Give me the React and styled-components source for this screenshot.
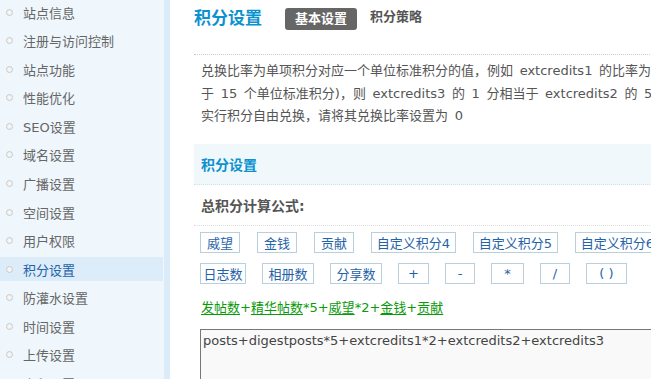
import React from "react";
import styled, { createGlobalStyle } from "styled-components";

const Global = createGlobalStyle`
  html, body {
    margin: 0;
    padding: 0;
    overflow: hidden;
    background: #fff;
  }
  body {
    font-family: "DejaVu Sans", "Noto Sans CJK SC", sans-serif;
    font-size: 13px;
    color: #555;
  }
`;

const Page = styled.div`
  display: flex;
  width: 100vw;
  height: 100vh;
  overflow: hidden;
`;

const Sidebar = styled.div`
  flex: 0 0 164px;
  background: #eff7fc;
  border-right: 6px solid #dcebf8;
  overflow: hidden;
`;

const NavList = styled.ul`
  list-style: none;
  margin: 0;
  padding: 0 1px 0 0;
  display: flex;
  flex-direction: column;
  gap: 4.58px;
`;

const NavItem = styled.li`
  display: flex;
  align-items: center;
  height: 24px;
  padding-left: 6px;
  gap: 10px;
  flex-shrink: 0;
  color: ${(p) => (p.$active ? "#1f63a8" : "#666")};
  background: ${(p) => (p.$active ? "#dcecf9" : "transparent")};
  white-space: nowrap;
`;

const Bullet = styled.span`
  width: 5px;
  height: 5px;
  border-radius: 50%;
  border: 1px solid #c9c9c9;
  background: #f6f6f6;
  box-shadow: inset 0 0 1px #ddd;
`;

const Main = styled.div`
  flex: 1;
  min-width: 0;
  overflow: hidden;
  padding-left: 24px;
`;

const Inner = styled.div`
  width: 900px;
`;

const Header = styled.div`
  display: flex;
  align-items: flex-start;
  height: 55px;
  box-sizing: border-box;
  padding-top: 8px;
  border-bottom: 1px dotted #ccc;
`;

const Title = styled.h2`
  margin: 0 23px 0 0;
  font-size: 17px;
  line-height: 18px;
  font-weight: bold;
  color: #0b92cf;
  font-family: "Noto Sans CJK SC", sans-serif;
`;

const Tab = styled.span`
  display: flex;
  align-items: center;
  height: 22px;
  padding: 0 10px;
  margin-right: 13px;
  border-radius: 3px;
  font-weight: bold;
  line-height: 22px;
  color: ${(p) => (p.$active ? "#fff" : "#555")};
  background: ${(p) => (p.$active ? "#666" : "transparent")};
  ${(p) => !p.$active && "padding: 0; height: 18px; line-height: 18px;"}
`;

const Note = styled.div`
  padding: 5px 0 0 7px;
  line-height: 22.5px;
  word-spacing: 2.5px;
  white-space: nowrap;
  color: #555;
`;

const SectionHead = styled.div`
  margin-top: 16px;
  height: 40px;
  display: flex;
  align-items: center;
  padding-left: 7px;
  background: #f1f8fc;
  border-bottom: 1px dotted #cfe2ee;
  font-size: 14px;
  font-weight: bold;
  color: #0b92cf;
`;

const Label = styled.div`
  height: 40px;
  display: flex;
  align-items: center;
  padding-left: 7px;
  border-bottom: 1px dotted #ddd;
  font-size: 14px;
  font-weight: bold;
  color: #555;
`;

const Buttons = styled.div`
  display: flex;
  flex-direction: column;
  gap: 10px;
  padding: 6px 0 0 6px;
`;

const BtnRow = styled.div`
  display: flex;
  gap: ${(p) => p.$gap}px;
`;

const Btn = styled.span`
  display: flex;
  align-items: center;
  justify-content: center;
  box-sizing: border-box;
  width: ${(p) => p.$w}px;
  height: 21px;
  border: 1px solid #b7d0dc;
  background: #fff;
  color: #1f63a8;
  white-space: nowrap;
  flex-shrink: 0;
`;

const Formula = styled.div`
  margin: 14px 0 0 7px;
  line-height: 20px;
  color: #0a9a0a;
  white-space: nowrap;
`;

const Term = styled.u`
  text-decoration: underline;
  text-underline-offset: 2px;
`;

const Area = styled.textarea`
  display: block;
  margin: 11px 0 0 6px;
  width: 620px;
  height: 90px;
  padding: 3px 2px;
  box-sizing: border-box;
  border: 1px solid #aaa;
  border-top-color: #777;
  border-left-color: #777;
  background: #f9f9f9;
  color: #444;
  font-family: "DejaVu Sans", sans-serif;
  font-size: 13px;
  line-height: 16px;
  resize: none;
  outline: none;
`;

const nav = [
  "站点信息",
  "注册与访问控制",
  "站点功能",
  "性能优化",
  "SEO设置",
  "域名设置",
  "广播设置",
  "空间设置",
  "用户权限",
  "积分设置",
  "防灌水设置",
  "时间设置",
  "上传设置",
  "水印设置",
];

const row1 = [
  ["威望", 40],
  ["金钱", 40],
  ["贡献", 40],
  ["自定义积分4", 85],
  ["自定义积分5", 85],
  ["自定义积分6", 85],
];

const row2 = [
  ["日志数", 46],
  ["相册数", 52],
  ["分享数", 52],
  ["+", 31],
  ["-", 30],
  ["*", 33],
  ["/", 30],
  ["( )", 41],
];

export default function App() {
  return (
    <Page>
      <Global />
      <Sidebar>
        <NavList>
          {nav.map((n) => (
            <NavItem key={n} $active={n === "积分设置"}>
              <Bullet />
              {n}
            </NavItem>
          ))}
        </NavList>
      </Sidebar>
      <Main>
        <Inner>
          <Header>
            <Title>积分设置</Title>
            <Tab $active>基本设置</Tab>
            <Tab>积分策略</Tab>
          </Header>
          <Note>
            <div>
              兑换比率为单项积分对应一个单位标准积分的值，例如 extcredits1 的比率为 1.5(相当于 1.5 个单位标准积分)、extcredits2 的比率为 3(相当于 3 个单位标准积分)、extcredits3 的比率为 15(相当
            </div>
            <div>
              于 15 个单位标准积分)，则 extcredits3 的 1 分相当于 extcredits2 的 5 分或 extcredits1 的 10 分。一旦设置为 0，则此项积分在积分兑换中不启用，也不允许用户
            </div>
            <div>实行积分自由兑换，请将其兑换比率设置为 0</div>
          </Note>
          <SectionHead>积分设置</SectionHead>
          <Label>总积分计算公式:</Label>
          <Buttons>
            <BtnRow $gap={17}>
              {row1.map(([t, w]) => (
                <Btn key={t} $w={w}>
                  {t}
                </Btn>
              ))}
            </BtnRow>
            <BtnRow $gap={16}>
              {row2.map(([t, w]) => (
                <Btn key={t} $w={w}>
                  {t}
                </Btn>
              ))}
            </BtnRow>
          </Buttons>
          <Formula>
            <Term>发帖数</Term>+<Term>精华帖数</Term>*5+<Term>威望</Term>*2+<Term>金钱</Term>+<Term>贡献</Term>
          </Formula>
          <Area
            readOnly
            defaultValue="posts+digestposts*5+extcredits1*2+extcredits2+extcredits3"
          />
        </Inner>
      </Main>
    </Page>
  );
}
